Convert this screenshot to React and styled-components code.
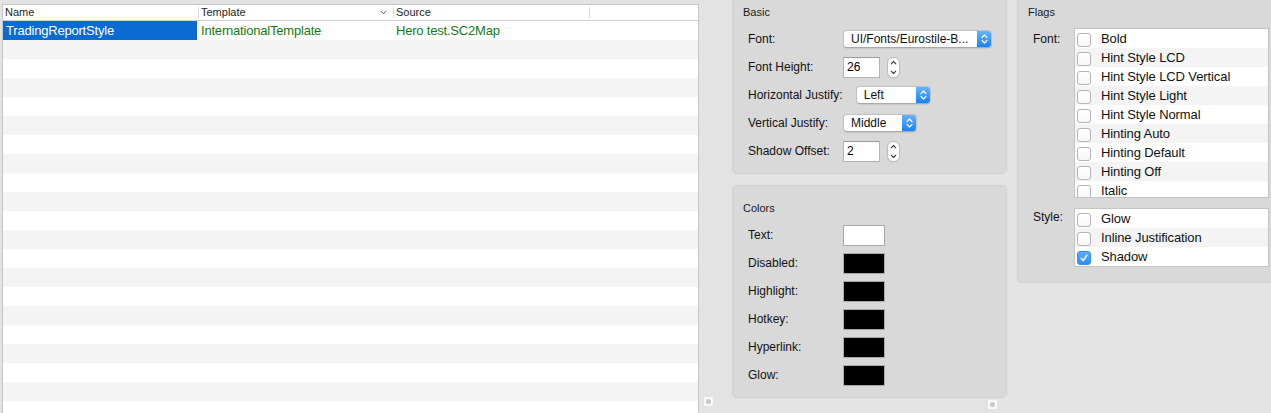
import React from 'react';
import styled, { createGlobalStyle } from 'styled-components';

const GlobalStyle = createGlobalStyle`
  html, body { margin: 0; padding: 0; background: #e3e3e3; }
  body {
    font-family: "Liberation Sans", Arial, Helvetica, sans-serif;
    color: #1b1b1b;
    overflow: hidden;
    -webkit-font-smoothing: antialiased;
  }
`;

const Window = styled.div`
  display: flex;
  align-items: flex-start;
  width: 1271px;
  height: 413px;
  overflow: hidden;
  background: #e3e3e3;
`;

/* ---------- table ---------- */
const TablePane = styled.div`
  flex-shrink: 0;
  box-sizing: border-box;
  width: 697px;
  height: 430px;
  margin: 4px 0 0 2px;
  border: 1px solid #c6c6c6;
  background: #fff;
  overflow: hidden;
`;

const COLS = '196px 195px 196px 1fr';

const HeaderRow = styled.div`
  display: grid;
  grid-template-columns: ${COLS};
  padding: 2px 0;
  border-bottom: 1px solid #d2d2d2;
  background: #fff;
`;

const HeaderCell = styled.div`
  display: flex;
  align-items: center;
  justify-content: space-between;
  height: 11px;
  padding: 0 6px 0 2px;
  font-size: 11px;
  line-height: 11px;
  color: #1e1e1e;
  border-right: 1px solid #dddddd;
  &:last-child { border-right: none; }
`;

const TableRow = styled.div`
  display: grid;
  grid-template-columns: ${COLS};
  height: 19px;
  background: ${p => (p.$odd ? '#f4f4f4' : '#ffffff')};
`;

const Cell = styled.div`
  padding-left: ${p => (p.$selected ? 3 : 2)}px;
  margin-right: ${p => (p.$selected ? 2 : 0)}px;
  font-size: 13px;
  letter-spacing: -0.2px;
  line-height: 19px;
  white-space: nowrap;
  overflow: hidden;
  color: ${p => (p.$selected ? '#ffffff' : p.$color || '#000')};
  background: ${p => (p.$selected ? '#0b6bd3' : 'transparent')};
`;

/* ---------- side panels ---------- */
const SideColumn = styled.div`
  position: relative;
  flex-shrink: 0;
  box-sizing: border-box;
  width: 318px;
  height: 430px;
  margin-top: -11px;
  padding-left: 33px;
  display: flex;
  flex-direction: column;
  gap: 11px;
`;

const GroupBox = styled.section`
  flex-shrink: 0;
  box-sizing: border-box;
  width: ${p => p.$width}px;
  margin-top: ${p => p.$top || 0}px;
  padding: 15px 0 ${p => p.$bottom || 8}px 15px;
  background: #d9d9d9;
  border: 1px solid #d0d0d0;
  border-radius: 5px;
`;

const BoxTitle = styled.div`
  margin: 0 0 6px -5px;
  font-size: 11px;
  line-height: 14px;
  color: #1a1a1a;
`;

const FieldRow = styled.div`
  display: flex;
  align-items: center;
  gap: 13px;
  height: 28px;
`;

const FieldLabel = styled.div`
  flex-shrink: 0;
  min-width: 82px;
  font-size: 12px;
  line-height: 14px;
  white-space: nowrap;
  color: #111;
`;

const PopUp = styled.div`
  display: flex;
  align-items: center;
  box-sizing: border-box;
  width: ${p => p.$width}px;
  height: 18px;
  padding-left: 7px;
  background: #fff;
  border: 1px solid #c2c2c2;
  border-bottom-color: #a9a9a9;
  border-radius: 4px;
  box-shadow: 0 0.5px 1px rgba(0, 0, 0, 0.08);
  overflow: hidden;
  font-size: 12px;
  line-height: 14px;
  color: #111;
  white-space: nowrap;
`;

const PopUpArrows = styled.div`
  display: flex;
  align-items: center;
  justify-content: center;
  flex-shrink: 0;
  width: 15px;
  height: 18px;
  margin: -1px -1px -1px auto;
  background: linear-gradient(#6db5fb, #1480f7);
  border-radius: 0 4px 4px 0;
`;

const NumberGroup = styled.div`
  display: flex;
  align-items: center;
  gap: 7px;
`;

const TextField = styled.div`
  box-sizing: border-box;
  width: 37px;
  height: 21px;
  padding-left: 3px;
  background: #fff;
  border: 1px solid #b3b3b3;
  border-top-color: #9c9c9c;
  font-size: 12px;
  line-height: 19px;
  color: #000;
`;

const Stepper = styled.div`
  display: flex;
  box-sizing: border-box;
  width: 13px;
  height: 21px;
  background: #fff;
  border: 1px solid #bcbcbc;
  border-radius: 6px;
  box-shadow: 0 0.5px 0.5px rgba(0, 0, 0, 0.08);
`;

const Swatch = styled.div`
  box-sizing: border-box;
  width: 42px;
  height: 21px;
  background: ${p => p.$color};
  border: 1px solid #a9a9a9;
`;

const FlagsBox = styled(GroupBox)`
  display: flex;
  flex-direction: column;
  gap: 10px;
  & > ${BoxTitle} { margin-bottom: -1px; }
`;

const FlagGroup = styled.div`
  display: grid;
  grid-template-columns: 41px 195px;
  align-items: start;
`;

const FlagLabel = styled.div`
  padding-top: ${p => p.$offset}px;
  font-size: 12px;
  line-height: 14px;
  color: #111;
`;

const CheckList = styled.div`
  box-sizing: border-box;
  height: ${p => p.$height}px;
  background: #fff;
  border: 1px solid #c4c4c4;
  overflow: hidden;
`;

const CheckRow = styled.div`
  display: flex;
  align-items: center;
  gap: 10px;
  height: 19px;
  padding-left: 2px;
  background: ${p => (p.$odd ? '#f4f4f4' : '#ffffff')};
  font-size: 13px;
  letter-spacing: -0.1px;
  line-height: 19px;
  color: #111;
  white-space: nowrap;
`;

const CheckBox = styled.div`
  display: flex;
  align-items: center;
  justify-content: center;
  flex-shrink: 0;
  box-sizing: border-box;
  width: 14px;
  height: 14px;
  margin-top: 3px;
  border-radius: 3px;
  border: 1px solid ${p => (p.$checked ? '#3390f6' : '#b5b5b5')};
  background: ${p => (p.$checked ? 'linear-gradient(#5fadfc, #2f8ef8)' : 'linear-gradient(#ffffff, #f7f7f7)')};
`;

const Handle = styled.div`
  position: absolute;
  left: ${p => p.$x}px;
  top: ${p => p.$y}px;
  display: flex;
  align-items: center;
  justify-content: center;
  width: 9px;
  height: 9px;
  background: #f8f8f8;
  &::after {
    content: '';
    width: 5px;
    height: 5px;
    border-radius: 50%;
    background: #c9c9c9;
  }
`;

/* ---------- small drawings ---------- */
const SortChevron = () => (
  <svg width="7" height="5" viewBox="0 0 7 5">
    <polyline points="0.8,1 3.5,3.8 6.2,1" fill="none" stroke="#555" strokeWidth="1" />
  </svg>
);

const PopArrowIcon = () => (
  <svg width="9" height="12" viewBox="0 0 9 12">
    <polyline points="2,4.6 4.5,2 7,4.6" fill="none" stroke="#fff" strokeWidth="1.3" strokeLinecap="round" strokeLinejoin="round" />
    <polyline points="2,7.4 4.5,10 7,7.4" fill="none" stroke="#fff" strokeWidth="1.3" strokeLinecap="round" strokeLinejoin="round" />
  </svg>
);

const StepperIcon = () => (
  <svg width="11" height="19" viewBox="0 0 11 19">
    <polyline points="3.2,5.8 5.5,3.5 7.8,5.8" fill="none" stroke="#3c3c3c" strokeWidth="1.1" strokeLinecap="round" strokeLinejoin="round" />
    <polyline points="3.2,13.2 5.5,15.5 7.8,13.2" fill="none" stroke="#3c3c3c" strokeWidth="1.1" strokeLinecap="round" strokeLinejoin="round" />
  </svg>
);

const CheckMark = () => (
  <svg width="10" height="10" viewBox="0 0 10 10">
    <polyline points="2.2,5.4 4.2,7.6 7.8,2.4" fill="none" stroke="#fff" strokeWidth="1.5" strokeLinecap="round" strokeLinejoin="round" />
  </svg>
);

/* ---------- data ---------- */
const columns = [
  { label: 'Name' },
  { label: 'Template', sorted: true },
  { label: 'Source' },
  { label: '' },
];

const records = [
  { name: 'TradingReportStyle', template: 'InternationalTemplate', source: 'Hero test.SC2Map' },
];

const fontFlags = [
  'Bold',
  'Hint Style LCD',
  'Hint Style LCD Vertical',
  'Hint Style Light',
  'Hint Style Normal',
  'Hinting Auto',
  'Hinting Default',
  'Hinting Off',
  'Italic',
];

const styleFlags = [
  { label: 'Glow', checked: false },
  { label: 'Inline Justification', checked: false },
  { label: 'Shadow', checked: true },
];

const colorFields = [
  { label: 'Text:', color: '#ffffff' },
  { label: 'Disabled:', color: '#000000' },
  { label: 'Highlight:', color: '#000000' },
  { label: 'Hotkey:', color: '#000000' },
  { label: 'Hyperlink:', color: '#000000' },
  { label: 'Glow:', color: '#000000' },
];

const PopUpButton = ({ width, value }) => (
  <PopUp $width={width}>
    {value}
    <PopUpArrows>
      <PopArrowIcon />
    </PopUpArrows>
  </PopUp>
);

const NumberInput = ({ value }) => (
  <NumberGroup>
    <TextField>{value}</TextField>
    <Stepper>
      <StepperIcon />
    </Stepper>
  </NumberGroup>
);

export default function App() {
  const rows = Array.from({ length: 21 }, (_, i) => records[i] || null);
  return (
    <>
      <GlobalStyle />
      <Window>
        <TablePane>
          <HeaderRow>
            {columns.map((c, i) => (
              <HeaderCell key={i}>
                <span>{c.label}</span>
                {c.sorted && <SortChevron />}
              </HeaderCell>
            ))}
          </HeaderRow>
          {rows.map((r, i) => (
            <TableRow key={i} $odd={i % 2 === 1}>
              {r ? (
                <>
                  <Cell $selected>{r.name}</Cell>
                  <Cell $color="#157a15">{r.template}</Cell>
                  <Cell $color="#157a15">{r.source}</Cell>
                  <Cell />
                </>
              ) : null}
            </TableRow>
          ))}
        </TablePane>

        <SideColumn>
          <GroupBox $width={275}>
            <BoxTitle>Basic</BoxTitle>
            <FieldRow>
              <FieldLabel>Font:</FieldLabel>
              <PopUpButton width={149} value="UI/Fonts/Eurostile-B..." />
            </FieldRow>
            <FieldRow>
              <FieldLabel>Font Height:</FieldLabel>
              <NumberInput value="26" />
            </FieldRow>
            <FieldRow>
              <FieldLabel>Horizontal Justify:</FieldLabel>
              <PopUpButton width={75} value="Left" />
            </FieldRow>
            <FieldRow>
              <FieldLabel>Vertical Justify:</FieldLabel>
              <PopUpButton width={74} value="Middle" />
            </FieldRow>
            <FieldRow>
              <FieldLabel>Shadow Offset:</FieldLabel>
              <NumberInput value="2" />
            </FieldRow>
          </GroupBox>

          <GroupBox $width={275}>
            <BoxTitle>Colors</BoxTitle>
            {colorFields.map(f => (
              <FieldRow key={f.label}>
                <FieldLabel>{f.label}</FieldLabel>
                <Swatch $color={f.color} />
              </FieldRow>
            ))}
          </GroupBox>

          <Handle $x={5} $y={408} />
          <Handle $x={289} $y={411} />
        </SideColumn>

        <FlagsBox $width={272} $top={-11} $bottom={15}>
          <BoxTitle>Flags</BoxTitle>
          <FlagGroup>
            <FlagLabel $offset={4}>Font:</FlagLabel>
            <CheckList $height={170}>
              {fontFlags.map((f, i) => (
                <CheckRow key={f} $odd={i % 2 === 1}>
                  <CheckBox />
                  {f}
                </CheckRow>
              ))}
            </CheckList>
          </FlagGroup>
          <FlagGroup>
            <FlagLabel $offset={2}>Style:</FlagLabel>
            <CheckList $height={59}>
              {styleFlags.map((f, i) => (
                <CheckRow key={f.label} $odd={i % 2 === 1}>
                  <CheckBox $checked={f.checked}>{f.checked && <CheckMark />}</CheckBox>
                  {f.label}
                </CheckRow>
              ))}
            </CheckList>
          </FlagGroup>
        </FlagsBox>
      </Window>
    </>
  );
}
